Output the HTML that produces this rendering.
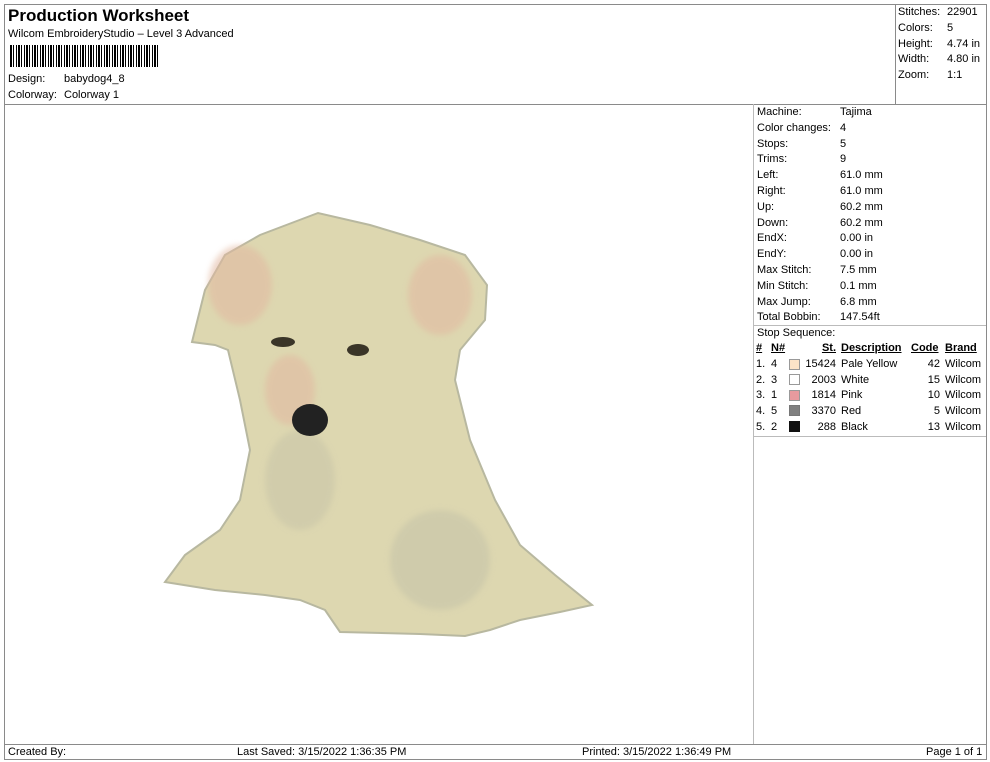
<!DOCTYPE html>
<html><head><meta charset="utf-8"><style>
body{margin:0;width:990px;height:762px;background:#fff;font-family:"Liberation Sans",Arial,sans-serif;color:#000;position:relative;overflow:hidden}
.a{position:absolute;white-space:nowrap}
.l{position:absolute;background:#8a8a8a}
.s{font-size:11px}
.r{text-align:right}
.sw{position:absolute;width:9px;height:9px;border:1px solid #999}
</style></head><body>
<div class="l" style="left:4px;top:4px;width:983px;height:1px"></div>
<div class="l" style="left:4px;top:4px;width:1px;height:756px"></div>
<div class="l" style="left:986px;top:4px;width:1px;height:756px"></div>
<div class="l" style="left:4px;top:759px;width:983px;height:1px"></div>
<div class="l" style="left:4px;top:104px;width:983px;height:1px"></div>
<div class="l" style="left:895px;top:4px;width:1px;height:100px"></div>
<div class="l" style="left:753px;top:104px;width:1px;height:640px;background:#bbb"></div>
<div class="l" style="left:4px;top:744px;width:983px;height:1px"></div>
<div class="l" style="left:753px;top:325px;width:233px;height:1px;background:#bbb"></div>
<div class="l" style="left:753px;top:436px;width:233px;height:1px;background:#bbb"></div>

<div class="a" style="left:8px;top:6px;font-size:17px;font-weight:bold">Production Worksheet</div>
<div class="a s" style="left:8px;top:28px">Wilcom EmbroideryStudio – Level 3 Advanced</div>
<div class="a" style="left:10px;top:45px;width:148px;height:22px;background:repeating-linear-gradient(90deg,#000 0 2px,#fff 2px 3px,#000 3px 4px,#fff 4px 6px,#000 6px 7px,#fff 7px 8px)"></div>
<div class="a s" style="left:8px;top:73px">Design:</div>
<div class="a s" style="left:64px;top:73px">babydog4_8</div>
<div class="a s" style="left:8px;top:89px">Colorway:</div>
<div class="a s" style="left:64px;top:89px">Colorway 1</div>

<div class="a s" style="left:898px;top:5px;line-height:15.8px">Stitches:<br>Colors:<br>Height:<br>Width:<br>Zoom:</div>
<div class="a s" style="left:947px;top:5px;line-height:15.8px">22901<br>5<br>4.74 in<br>4.80 in<br>1:1</div>

<div class="a s" style="left:757px;top:105px;line-height:15.8px">Machine:<br>Color changes:<br>Stops:<br>Trims:<br>Left:<br>Right:<br>Up:<br>Down:<br>EndX:<br>EndY:<br>Max Stitch:<br>Min Stitch:<br>Max Jump:<br>Total Bobbin:<br>Stop Sequence:</div>
<div class="a s" style="left:840px;top:105px;line-height:15.8px">Tajima<br>4<br>5<br>9<br>61.0 mm<br>61.0 mm<br>60.2 mm<br>60.2 mm<br>0.00 in<br>0.00 in<br>7.5 mm<br>0.1 mm<br>6.8 mm<br>147.54ft</div>

<div class="a s" style="left:756px;top:342px;font-weight:bold;text-decoration:underline">#</div>
<div class="a s" style="left:771px;top:342px;font-weight:bold;text-decoration:underline">N#</div>
<div class="a s r" style="left:796px;width:40px;top:342px;font-weight:bold;text-decoration:underline">St.</div>
<div class="a s" style="left:841px;top:342px;font-weight:bold;text-decoration:underline">Description</div>
<div class="a s" style="left:911px;top:342px;font-weight:bold;text-decoration:underline">Code</div>
<div class="a s" style="left:945px;top:342px;font-weight:bold;text-decoration:underline">Brand</div>

<div class="a s" style="left:756px;top:357px;line-height:15.7px">1.<br>2.<br>3.<br>4.<br>5.</div>
<div class="a s" style="left:771px;top:357px;line-height:15.7px">4<br>3<br>1<br>5<br>2</div>
<div class="sw" style="left:789px;top:359px;background:#fbe3c8"></div>
<div class="sw" style="left:789px;top:374px;background:#fff"></div>
<div class="sw" style="left:789px;top:390px;background:#e79a9e"></div>
<div class="sw" style="left:789px;top:405px;background:#808080;border-color:#777"></div>
<div class="sw" style="left:789px;top:421px;background:#111;border-color:#111"></div>
<div class="a s r" style="left:796px;width:40px;top:357px;line-height:15.7px">15424<br>2003<br>1814<br>3370<br>288</div>
<div class="a s" style="left:841px;top:357px;line-height:15.7px">Pale Yellow<br>White<br>Pink<br>Red<br>Black</div>
<div class="a s r" style="left:910px;width:30px;top:357px;line-height:15.7px">42<br>15<br>10<br>5<br>13</div>
<div class="a s" style="left:945px;top:357px;line-height:15.7px">Wilcom<br>Wilcom<br>Wilcom<br>Wilcom<br>Wilcom</div>

<svg class="a" style="left:0;top:0" width="990" height="762">
<defs><filter id="b"><feGaussianBlur stdDeviation="3"/></filter></defs>
<path d="M192,342 L205,290 L225,255 L260,235 L318,213 L370,225 L420,240 L465,255 L487,285 L485,320 L460,350 L455,380 L470,440 L495,500 L520,545 L555,575 L592,605 L560,612 L520,620 L490,630 L465,636 L420,634 L340,632 L325,610 L300,600 L265,595 L215,590 L165,582 L185,555 L220,530 L240,500 L250,450 L240,400 L228,350 L215,345 Z" fill="#ddd7b0" stroke="#b8b8a0" stroke-width="2"/>
<g filter="url(#b)" opacity="0.55">
<ellipse cx="240" cy="285" rx="32" ry="40" fill="#e2b8a0"/>
<ellipse cx="440" cy="295" rx="32" ry="40" fill="#e2b8a0"/>
<ellipse cx="290" cy="390" rx="25" ry="35" fill="#e2b8a0"/>
<ellipse cx="300" cy="480" rx="35" ry="50" fill="#c8c4a8"/>
<ellipse cx="440" cy="560" rx="50" ry="50" fill="#c4c2a8"/>
</g>
<ellipse cx="283" cy="342" rx="12" ry="5" fill="#3a3528"/>
<ellipse cx="358" cy="350" rx="11" ry="6" fill="#3a3528"/>
<ellipse cx="310" cy="420" rx="18" ry="16" fill="#222"/>
</svg>

<div class="a s" style="left:8px;top:746px">Created By:</div>
<div class="a s" style="left:237px;top:746px">Last Saved: 3/15/2022 1:36:35 PM</div>
<div class="a s" style="left:582px;top:746px">Printed: 3/15/2022 1:36:49 PM</div>
<div class="a s" style="left:926px;top:746px">Page 1 of 1</div>
</body></html>
